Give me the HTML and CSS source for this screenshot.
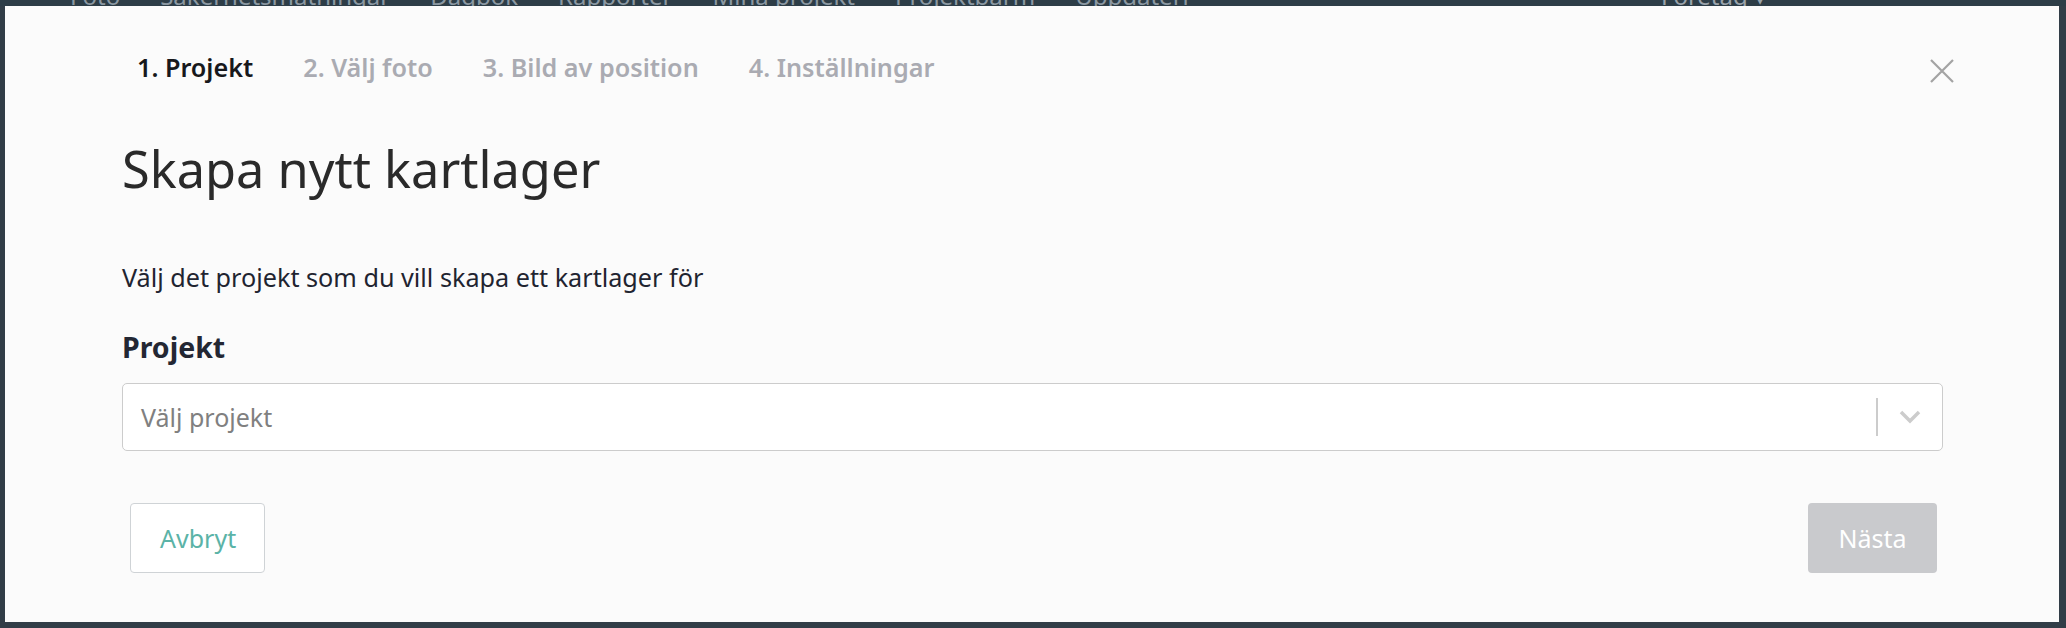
FILE: index.html
```html
<!DOCTYPE html>
<html lang="sv">
<head>
<meta charset="utf-8">
<title>Skapa nytt kartlager</title>
<link rel="stylesheet" href="styles.css">
</head>
<body>
<div class="app">
  <nav class="topnav">
    <span class="nav-item">Foto</span>
    <span class="nav-item">Säkerhetsmätningar</span>
    <span class="nav-item">Dagbok</span>
    <span class="nav-item">Rapporter</span>
    <span class="nav-item">Mina projekt</span>
    <span class="nav-item">Projektbarm</span>
    <span class="nav-item">Uppdaterr</span>
    <span class="nav-spacer"></span>
    <span class="nav-item nav-company">Företag ▾</span>
  </nav>
</div>

<div class="backdrop"></div>

<div class="modal" role="dialog">
  <div class="modal-header">
    <ol class="steps">
      <li class="step active">1. Projekt</li>
      <li class="step">2. Välj foto</li>
      <li class="step">3. Bild av position</li>
      <li class="step">4. Inställningar</li>
    </ol>
    <button class="close" aria-label="Stäng">
      <svg width="24" height="24" viewBox="0 0 24 24"><path d="M1 1 L23 23 M23 1 L1 23" stroke="#a3a3a3" stroke-width="2.2" fill="none"/></svg>
    </button>
  </div>

  <h1 class="title">Skapa nytt kartlager</h1>
  <p class="lead">Välj det projekt som du vill skapa ett kartlager för</p>

  <label class="field-label">Projekt</label>
  <div class="select">
    <span class="placeholder">Välj projekt</span>
    <span class="sep"></span>
    <span class="indicator">
      <svg width="22" height="14" viewBox="0 0 22 14"><path d="M2 2 L11 11 L20 2" stroke="#cccccc" stroke-width="3.5" fill="none"/></svg>
    </span>
  </div>

  <div class="footer">
    <button class="btn btn-cancel">Avbryt</button>
    <button class="btn btn-next">Nästa</button>
  </div>
</div>
</body>
</html>
```

FILE: styles.css
```css
* { box-sizing: border-box; }

html, body {
  margin: 0;
  padding: 0;
  width: 2066px;
  height: 628px;
  overflow: hidden;
}

body {
  background: #47505a;
  font-family: "Noto Sans", "Open Sans", sans-serif;
}

.app {
  height: 628px;
  background: #3c4852;
}

.topnav {
  height: 6px;
  overflow: hidden;
  display: flex;
  align-items: flex-end;
  background: #2d3d47;
  padding-left: 70px;
  gap: 40px;
}

.nav-item {
  font-size: 24px;
  line-height: 24px;
  color: #8b98a2;
  margin-bottom: -2px;
  white-space: nowrap;
}

.nav-spacer { flex: 1; }

.nav-company {
  margin-right: 300px;
  color: #9aa3ab;
}

.backdrop {
  position: fixed;
  inset: 6px 0 0 0;
  background: rgba(40, 52, 62, 0.55);
}

.modal {
  position: fixed;
  left: 5px;
  top: 6px;
  width: 2054px;
  height: 616px;
  background: #fbfbfb;
  padding: 44px 116px 0 117px;
  display: flex;
  flex-direction: column;
}

.modal-header {
  display: flex;
  align-items: center;
  justify-content: space-between;
}

.steps {
  list-style: none;
  margin: 0;
  padding: 0 0 0 15px;
  display: flex;
  gap: 50px;
}

.step {
  font-size: 25.2px;
  line-height: 34px;
  font-weight: 600;
  color: #aaabb2;
}

.step.active { color: #17181c; }

.close {
  border: 0;
  background: none;
  padding: 0;
  width: 24px;
  height: 24px;
  margin-right: -11px;
  margin-top: 7px;
  cursor: pointer;
  display: flex;
}

.title {
  margin: 55px 0 0;
  font-size: 50.5px;
  line-height: 60px;
  font-weight: 400;
  color: #2a2a2a;
}

.lead {
  margin: 61px 0 0;
  font-size: 25.2px;
  line-height: 34px;
  color: #1f2430;
}

.field-label {
  margin-top: 34px;
  font-size: 28.5px;
  line-height: 38px;
  font-weight: 700;
  color: #232733;
}

.select {
  margin-top: 17px;
  height: 68px;
  border: 1px solid #cccccc;
  border-radius: 5px;
  background: #ffffff;
  display: flex;
  align-items: center;
  padding-left: 18px;
}

.placeholder {
  flex: 1;
  font-size: 25px;
  color: #808080;
}

.sep {
  width: 2px;
  height: 38px;
  background: #cccccc;
}

.indicator {
  width: 64px;
  display: flex;
  justify-content: center;
  align-items: center;
}

.footer {
  margin-top: 52px;
  display: flex;
  justify-content: space-between;
  padding: 0 6px 0 8px;
}

.btn {
  height: 70px;
  font-family: inherit;
  font-size: 25px;
  border-radius: 4px;
  cursor: pointer;
}

.btn-cancel {
  padding: 0 29px;
  width: 135px;
  background: #ffffff;
  border: 1px solid #cfd3d6;
  color: #5bb3a7;
}

.btn-next {
  width: 129px;
  padding: 0;
  background: #c9cacd;
  border: 0;
  color: #ffffff;
}
```
